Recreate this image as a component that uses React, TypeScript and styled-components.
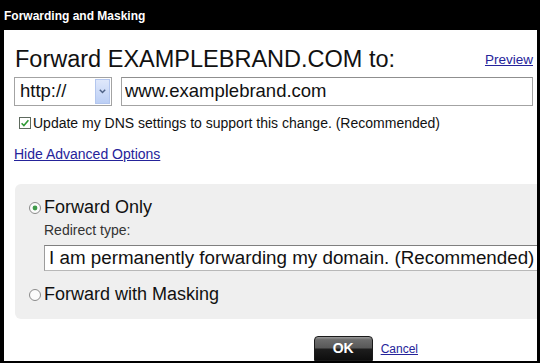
import React from "react";
import styled, { createGlobalStyle } from "styled-components";

const GlobalStyle = createGlobalStyle`
  html, body {
    margin: 0;
    padding: 0;
    background: #000;
  }
  body {
    font-family: "Liberation Sans", Arial, sans-serif;
    color: #111;
  }
`;

const Dialog = styled.div`
  width: 540px;
  height: 363px;
  background: #000;
  display: flex;
  flex-direction: column;
  overflow: hidden;
`;

const TitleBar = styled.div`
  height: 30px;
  flex: none;
  display: flex;
  align-items: center;
  padding: 1px 0 0 4px;
  box-sizing: border-box;
  color: #fff;
  font-size: 12px;
  font-weight: bold;
`;

const Body = styled.div`
  flex: 1;
  margin: 0 3px 2px 4px;
  padding-left: 10px;
  background: #fff;
  display: flex;
  flex-direction: column;
  overflow: hidden;
`;

const HeadRow = styled.div`
  display: flex;
  justify-content: space-between;
  align-items: flex-start;
  margin: 17px 4px 0 0;
`;

const Heading = styled.h1`
  margin: 0 0 0 1px;
  font-size: 23.5px;
  line-height: 24px;
  font-weight: normal;
`;

const Link = styled.a<{ $size?: number }>`
  color: #25239a;
  text-decoration: underline;
  font-size: ${(p) => p.$size ?? 14}px;
  line-height: 16px;
  cursor: pointer;
`;

const PreviewLink = styled(Link)`
  margin-top: 5px;
`;

const UrlRow = styled.div`
  display: flex;
  margin: 6px 4px 0 0;
  height: 29px;
`;

const Select = styled.div<{ $width?: number }>`
  box-sizing: border-box;
  display: flex;
  align-items: center;
  width: ${(p) => (p.$width ? `${p.$width}px` : "auto")};
  height: 100%;
  border: 1px solid #a3a3a3;
  background: #fff;
  font-size: 18.5px;
`;

const SelectText = styled.span`
  flex: 1;
  padding-left: 5px;
`;

const ArrowButton = styled.span`
  flex: none;
  width: 15px;
  align-self: stretch;
  margin: 1px 1px 1px 0;
  display: flex;
  align-items: center;
  justify-content: center;
  background: linear-gradient(#dfe8fb, #bccff5);
  border: 1px solid #b3c6ee;
  box-sizing: border-box;
`;

const TextInput = styled.input`
  flex: 1;
  margin-left: 9px;
  min-width: 0;
  height: 100%;
  box-sizing: border-box;
  border: 1px solid #a3a3a3;
  border-top-color: #8f8f8f;
  padding: 0 0 0 3px;
  font-family: "Liberation Sans", Arial, sans-serif;
  font-size: 18.5px;
  color: #111;
  outline: none;
`;

const CheckRow = styled.label`
  display: flex;
  align-items: center;
  gap: 2px;
  margin-top: 9px;
  padding-left: 5px;
  font-size: 14px;
  line-height: 16px;
`;

const HideLink = styled(Link)`
  align-self: flex-start;
  margin-top: 15px;
`;

const Panel = styled.div`
  margin: 22px 0 0 1px;
  padding: 13px 0 17px 14px;
  background: #efefef;
  border-radius: 6px 0 0 6px;
  display: flex;
  flex-direction: column;
  overflow: hidden;
`;

const RadioRow = styled.label<{ $gap?: number }>`
  display: flex;
  align-items: center;
  gap: 3px;
  margin-top: ${(p) => p.$gap ?? 0}px;
  font-size: 18px;
  line-height: 20px;
`;

const Indent = styled.div`
  padding-left: 15px;
  display: flex;
  flex-direction: column;
`;

const SubLabel = styled.div`
  margin-top: 5px;
  font-size: 14px;
  line-height: 16px;
  color: #333;
`;

const RedirectBox = styled.div`
  margin: 7px -12px 0 0;
  height: 26px;
  box-sizing: border-box;
  display: flex;
  align-items: center;
  padding-left: 4px;
  background: #fff;
  border: 1px solid #9c9c9c;
  border-top-color: #7f7f7f;
  border-bottom-color: #b8b8b8;
  font-size: 18.8px;
  white-space: nowrap;
`;

const Footer = styled.div`
  display: flex;
  justify-content: flex-end;
  align-items: center;
  gap: 8px;
  margin-top: 17px;
  padding-right: 119px;
`;

const OkButton = styled.button`
  width: 59px;
  height: 25px;
  flex: none;
  border: 1px solid #1a1a1a;
  border-radius: 4px 4px 0 0;
  background: linear-gradient(
    #9a9a9a 0%,
    #6c6c6c 12%,
    #585858 48%,
    #1e1e1e 52%,
    #0e0e0e 100%
  );
  color: #fff;
  font-family: "Liberation Sans", Arial, sans-serif;
  font-size: 14px;
  font-weight: bold;
  padding: 0 0 2px;
`;

const CancelLink = styled(Link)`
  line-height: 14px;
`;

const CheckBox = () => (
  <svg width="12" height="12" viewBox="0 0 12 12">
    <rect x="0.5" y="0.5" width="11" height="11" fill="#fff" stroke="#5e6a5e" />
    <path d="M2.6 6.2 L4.9 8.6 L9.4 3.2" fill="none" stroke="#2f9a35" strokeWidth="1.6" />
  </svg>
);

const Radio = ({ checked }: { checked?: boolean }) => (
  <svg width="12" height="12" viewBox="0 0 12 12" style={{ marginTop: 2 }}>
    <circle cx="6" cy="6" r="5.5" fill="#fbfbfb" stroke="#8a8a8a" />
    {checked && <circle cx="6" cy="6" r="2.4" fill="#3f9a4a" />}
  </svg>
);

const Chevron = () => (
  <svg width="7" height="5" viewBox="0 0 7 5">
    <path d="M0.8 0.8 L3.5 3.6 L6.2 0.8" fill="none" stroke="#4d6185" strokeWidth="1.4" />
  </svg>
);

export default function App() {
  return (
    <Dialog>
      <GlobalStyle />
      <TitleBar>Forwarding and Masking</TitleBar>
      <Body>
        <HeadRow>
          <Heading>Forward EXAMPLEBRAND.COM to:</Heading>
          <PreviewLink $size={13.5}>Preview</PreviewLink>
        </HeadRow>
        <UrlRow>
          <Select $width={98}>
            <SelectText>http://</SelectText>
            <ArrowButton>
              <Chevron />
            </ArrowButton>
          </Select>
          <TextInput readOnly value="www.examplebrand.com" />
        </UrlRow>
        <CheckRow>
          <CheckBox />
          Update my DNS settings to support this change. (Recommended)
        </CheckRow>
        <HideLink>Hide Advanced Options</HideLink>
        <Panel>
          <RadioRow>
            <Radio checked />
            Forward Only
          </RadioRow>
          <Indent>
            <SubLabel>Redirect type:</SubLabel>
            <RedirectBox>I am permanently forwarding my domain. (Recommended)</RedirectBox>
          </Indent>
          <RadioRow $gap={13}>
            <Radio />
            Forward with Masking
          </RadioRow>
        </Panel>
        <Footer>
          <OkButton>OK</OkButton>
          <CancelLink $size={12}>Cancel</CancelLink>
        </Footer>
      </Body>
    </Dialog>
  );
}
